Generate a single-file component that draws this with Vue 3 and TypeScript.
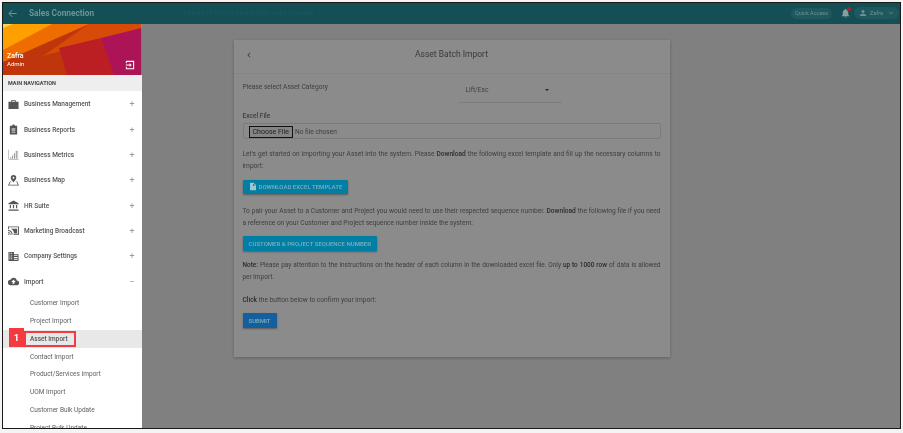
<script setup lang="ts">
interface NavItem {
  label: string
  icon: string
  open?: boolean
}

const navItems: NavItem[] = [
  { label: 'Business Management', icon: 'case' },
  { label: 'Business Reports', icon: 'clip' },
  { label: 'Business Metrics', icon: 'bars' },
  { label: 'Business Map', icon: 'map' },
  { label: 'HR Suite', icon: 'bank' },
  { label: 'Marketing Broadcast', icon: 'cast' },
  { label: 'Company Settings', icon: 'grid' },
  { label: 'Import', icon: 'cloud', open: true }
]

const subItems = [
  'Customer Import',
  'Project Import',
  'Asset Import',
  'Contact Import',
  'Product/Services Import',
  'UOM Import',
  'Customer Bulk Update',
  'Project Bulk Update'
]
</script>

<template>
  <div class="frame">
    <header class="topbar">
      <svg class="back" width="11" height="11" viewBox="0 0 24 24"><path d="M21 11H6.500l5.600-5.600L11 4l-8 8 8 8 1.100-1.400L6.500 13H21z" /></svg>
      <span class="brand">Sales Connection</span>
      <span class="ticker">Failure is the continent that gives courage</span>
      <div class="top-right">
        <span class="pill">Quick Access</span>
        <span class="bell">
          <svg width="11" height="12" viewBox="0 0 24 24"><path d="M12 22c1.100 0 2-.9 2-2h-4c0 1.100.9 2 2 2zm6-6v-5c0-3.100-1.600-5.600-4.500-6.300V4a1.500 1.500 0 0 0-3 0v.7C7.600 5.400 6 7.900 6 11v5l-2 2v1h16v-1z" /></svg>
          <i class="dot"></i>
        </span>
        <span class="pill user">
          <svg width="8" height="8" viewBox="0 0 24 24"><path d="M12 12a4.500 4.500 0 1 0 0-9 4.500 4.500 0 0 0 0 9zm0 2c-3 0-9 1.500-9 4.500V21h18v-2.500c0-3-6-4.500-9-4.500z" /></svg>
          <span class="user-name">Zafra</span>
          <svg width="8" height="8" viewBox="0 0 24 24"><path d="M7.400 8.600 12 13.200l4.600-4.600L18 10l-6 6-6-6z" /></svg>
        </span>
      </div>
    </header>

    <div class="body">
      <aside class="sidebar">
        <div class="profile">
          <svg class="art" viewBox="0 0 138.500 51" preserveAspectRatio="none">
            <rect width="138.500" height="51" fill="#bf360c" />
            <polygon points="86,0 138.500,0 138.500,4 40,32" fill="#d84a08" />
            <polygon points="0,0 86,0 0,38" fill="#ef6c00" />
            <polygon points="0,0 49,0 0,26" fill="#ffa000" />
            <polygon points="0,0 10,0 0,4" fill="#ffd54f" />
            <polygon points="56,24 98,14 111,51 64,51" fill="#bb1f24" />
            <polygon points="98,14 138.500,4 138.500,51 111,51" fill="#ad1457" />
          </svg>
          <div class="who">
            <div>Zafra</div>
            <div class="role">Admin</div>
          </div>
          <svg class="logout" width="10" height="10" viewBox="0 0 24 24"><path d="M2 2h20v20H2v-6h2.500v3.500h15v-15h-15V8H2zm9 5 5 5-5 5v-4H2v-2h9z" /></svg>
        </div>
        <div class="nav-title">MAIN NAVIGATION</div>
        <nav class="nav">
          <div v-for="item in navItems" :key="item.label" class="nav-item">
            <svg class="nav-icon" :class="item.icon" width="11" height="11" viewBox="0 0 24 24">
              <path v-if="item.icon === 'case'" d="M9 2h6a2 2 0 0 1 2 2v2h6v16H1V6h6V4a2 2 0 0 1 2-2zm0 2v2h6V4z" />
              <path v-else-if="item.icon === 'clip'" d="M4 4h5a3 3 0 0 1 6 0h5v19H4zm4 6v2h8v-2zm0 4v2h8v-2zm0 4v1h8v-1z" />
              <path v-else-if="item.icon === 'bars'" d="M1 1h1v21h21v1H1zm4 17h2v3H5zm4-4h2v7H9zm4-5h2v12h-2zm4-5h2v17h-2zm4 0h1v17h-1z" />
              <path v-else-if="item.icon === 'map'" d="M12 0a6 6 0 0 1 6 6c0 3.500-6 10-6 10S6 9.500 6 6a6 6 0 0 1 6-6zm0 4a2 2 0 1 0 0 4 2 2 0 0 0 0-4zM4 14h2.500l1 1.500H5.300L2.600 21.500h18.800L18.700 15.500h-2.200l1-1.500H20l4 9H0z" />
              <path v-else-if="item.icon === 'bank'" d="M12 1 23 7v2H1V7zM4 11h2.500v7H4zm6.700 0h2.600v7h-2.600zm6.800 0H20v7h-2.500zM1 20h22v1.200H1zm0 2.500h22V24H1z" />
              <path v-else-if="item.icon === 'cast'" d="M0 3h24v18H12v-2h10V5H2v4H0zm0 8c6 0 10 4 10 10H8c0-4.500-3.500-8-8-8zm0 4c3.500 0 6 2.500 6 6H4c0-2.500-1.500-4-4-4zm0 4h2.500v2H0zM5 8h15v10h-7c0-5-3-9-8-10z" />
              <path v-else-if="item.icon === 'grid'" d="M1 2h12v5h10v15H1zm2 2v2h2V4zm4 0v2h2V4zM3 8v2h2V8zm4 0v2h2V8zm6 1v2h8V9zM3 12v2h2v-2zm4 0v2h2v-2zm6 1v2h8v-2zM3 16v2h2v-2zm4 0v2h2v-2zm6 1v2h8v-2z" />
              <path v-else d="M19.400 10A7.500 7.500 0 0 0 5.400 8 6 6 0 0 0 6 20h13a5 5 0 0 0 .4-10zM14 13v4h-4v-4H7l5-5 5 5z" />
            </svg>
            <span class="nav-label">{{ item.label }}</span>
            <span class="nav-sign">{{ item.open ? '−' : '+' }}</span>
          </div>
          <div
            v-for="sub in subItems"
            :key="sub"
            class="sub-item"
            :class="{ active: sub === 'Asset Import' }"
          >
            <span v-if="sub === 'Asset Import'" class="marker">1</span>
            <span class="sub-label">{{ sub }}</span>
          </div>
        </nav>
      </aside>

      <main class="main">
        <section class="card">
          <div class="card-head">
            <svg class="chev" width="10" height="10" viewBox="0 0 24 24"><path d="M15.400 7.400 10.800 12l4.600 4.600L14 18l-6-6 6-6z" /></svg>
            <h1>Asset Batch Import</h1>
          </div>
          <div class="card-body">
            <div class="select-row">
              <span>Please select Asset Category</span>
              <div class="select">
                <span>Lift/Esc</span>
                <i class="caret"></i>
              </div>
            </div>
            <div class="file-title">Excel File</div>
            <div class="file-box">
              <span class="choose">Choose File</span>
              <span class="no-file">No file chosen</span>
            </div>
            <p class="p-first">
              Let's get started on importing your Asset into the system. Please <b>Download</b> the following excel template and fill up the necessary columns to import:
            </p>
            <button class="btn teal" type="button">
              <svg width="8" height="9" viewBox="0 0 24 24"><path d="M3 1h11l7 7v15H3zm9 2v7h7z" /></svg>
              DOWNLOAD EXCEL TEMPLATE
            </button>
            <p class="p-pair">
              To pair your Asset to a Customer and Project you would need to use their respected sequence number. <b>Download</b> the following file if you need a reference on your Customer and Project sequence number inside the system:
            </p>
            <button class="btn teal" type="button">CUSTOMER &amp; PROJECT SEQUENCE NUMBER</button>
            <p class="p-note">
              <b>Note:</b> Please pay attention to the instructions on the header of each column in the downloaded excel file. Only <b>up to 1000 row</b> of data is allowed per import.
            </p>
            <p class="p-click"><b>Click</b> the button below to confirm your import:</p>
            <button class="btn blue" type="button">SUBMIT</button>
          </div>
        </section>
      </main>
    </div>
  </div>
</template>

<style>
html,
body {
  margin: 0;
  background: #f4f4f4;
}
</style>

<style scoped>
.frame {
  box-sizing: border-box;
  width: 899px;
  height: 426.500px;
  margin: 2px 2px 0;
  border: 1.500px solid #1a1a1a;
  display: flex;
  flex-direction: column;
  overflow: hidden;
  font-family: Roboto, "Liberation Sans", sans-serif;
}

.topbar {
  height: 20.500px;
  flex: none;
  background: #134f55;
  display: flex;
  align-items: center;
  padding: 0 1px 0 4px;
  color: #6b9497;
  filter: blur(0.3px);
}

.back {
  fill: #6b9497;
  margin-right: 11px;
}

.brand {
  font-size: 8.300px;
  font-weight: 700;
}

.ticker {
  margin-left: 90px;
  font-size: 7px;
  color: #1c5a60;
}

.top-right {
  margin-left: auto;
  display: flex;
  align-items: center;
}

.pill {
  display: flex;
  align-items: center;
  height: 11px;
  padding: 0 4px;
  border-radius: 6px;
  background: #1f585e;
  font-size: 5.500px;
  color: #6b9497;
}

.pill svg {
  fill: #6b9497;
}

.user {
  height: 12px;
  padding: 0 4px 0 5px;
}

.user-name {
  margin: 0 4px 0 3px;
}

.bell {
  position: relative;
  display: flex;
  margin: 0 3px 0 8px;
}

.bell svg {
  fill: #8c9c9c;
}

.dot {
  position: absolute;
  top: 0;
  right: 0;
  width: 4px;
  height: 4px;
  border-radius: 50%;
  background: #b3202a;
}

.body {
  flex: 1;
  display: flex;
  min-height: 0;
  filter: blur(0.3px);
}

.sidebar {
  width: 138.500px;
  flex: none;
  background: #fff;
  overflow: hidden;
}

.profile {
  position: relative;
  height: 51px;
  color: #fff;
  font-size: 7px;
  font-weight: 500;
}

.art {
  display: block;
  width: 100%;
  height: 100%;
}

.who {
  position: absolute;
  left: 4px;
  bottom: 6px;
  line-height: 8.500px;
}

.role {
  font-size: 6px;
  font-weight: 400;
}

.logout {
  position: absolute;
  right: 7px;
  bottom: 5px;
  fill: #fff;
}

.nav-title {
  height: 16.500px;
  line-height: 16.500px;
  padding-left: 5px;
  background: #eee;
  font-size: 5.500px;
  font-weight: 700;
  color: #444;
}

.nav {
  padding-top: 0.500px;
}

.nav-item {
  height: 25.350px;
  display: flex;
  align-items: center;
  padding: 0 7px 0 5px;
  font-size: 6.500px;
  font-weight: 500;
  color: #555;
}

.nav-icon {
  fill: #555;
  margin-right: 5px;
  flex: none;
}

.nav-icon.bars {
  fill: #888;
}

.nav-label {
  flex: 1;
}

.nav-sign {
  color: #999;
  font-size: 9px;
  font-weight: 400;
}

.sub-item {
  position: relative;
  height: 17.800px;
  display: flex;
  align-items: center;
  padding-left: 27px;
  font-size: 6.500px;
  color: #606060;
}

.sub-item.active {
  background: #e8e8e8;
  font-weight: 500;
  color: #555;
}

.sub-label {
  position: relative;
}

.active .sub-label::after {
  content: "";
  position: absolute;
  left: -6px;
  right: -8px;
  top: -4px;
  bottom: -4px;
  border: 2px solid #f23a40;
}

.marker {
  position: absolute;
  left: 6px;
  top: -2px;
  width: 15px;
  height: 19.500px;
  background: #f23a40;
  color: #fff;
  font-size: 9.500px;
  font-weight: 700;
  display: flex;
  align-items: center;
  justify-content: center;
}

.main {
  flex: 1;
  background: #808080;
  padding: 16px 0 0 92px;
  min-width: 0;
}

.card {
  width: 436px;
  height: 317px;
  background: #8b8b8b;
  box-shadow: 0 1px 3px rgba(0, 0, 0, 0.25);
  color: #3e3e3e;
  font-size: 6.600px;
}

.card-head {
  position: relative;
  height: 34px;
  border-bottom: 1px solid #858585;
  display: flex;
  justify-content: center;
  padding-top: 9px;
  box-sizing: border-box;
}

.card-head h1 {
  margin: 0;
  font-size: 8.500px;
  font-weight: 400;
  color: #3a3a3a;
}

.chev {
  position: absolute;
  left: 10px;
  top: 10px;
  fill: #26456a;
}

.card-body {
  padding: 9px 9px 0;
}

.select-row {
  display: flex;
  height: 22px;
}

.select-row > span {
  width: 216px;
}

.select {
  width: 103px;
  height: 20px;
  box-sizing: border-box;
  border-bottom: 1px solid #7c7c7c;
  padding: 3px 7px 0;
  display: flex;
  align-items: flex-start;
  justify-content: space-between;
}

.caret {
  margin-top: 3px;
  border: solid transparent;
  border-width: 2px 2px 0;
  border-top-color: #222;
  margin-right: 6px;
}

.file-title {
  margin-top: 7px;
  font-weight: 500;
}

.file-box {
  margin-top: 3px;
  height: 16px;
  box-sizing: border-box;
  border: 1px solid #7a7a7a;
  border-radius: 2px;
  display: flex;
  align-items: center;
  padding: 2px 0 0 5px;
  gap: 2px;
}

.choose {
  border: 1px solid #111;
  padding: 0 3px;
  height: 10px;
  line-height: 10px;
  color: #222;
  font-size: 7px;
  background: #858585;
}

p {
  margin: 0;
  line-height: 12px;
  text-align: justify;
}

p b {
  font-weight: 500;
  color: #2c2c2c;
}

.p-first {
  padding-top: 9.500px;
}

.p-pair {
  padding-top: 10.500px;
}

.p-note {
  padding-top: 8px;
  font-size: 6.450px;
}

.p-click {
  padding-top: 11px;
}

.btn {
  display: flex;
  align-items: center;
  gap: 2px;
  margin-top: 7.500px;
  height: 14.500px;
  padding: 0 6px;
  border: 0;
  border-radius: 1px;
  color: #7fb0bd;
  font-family: inherit;
  font-size: 6.050px;
  font-weight: 500;
  box-shadow: 0 1px 2px rgba(0, 0, 0, 0.35);
}

.btn svg {
  fill: #9cc5cf;
}

.teal {
  background: #007ea3;
}

.blue {
  background: #155f9e;
}
</style>
